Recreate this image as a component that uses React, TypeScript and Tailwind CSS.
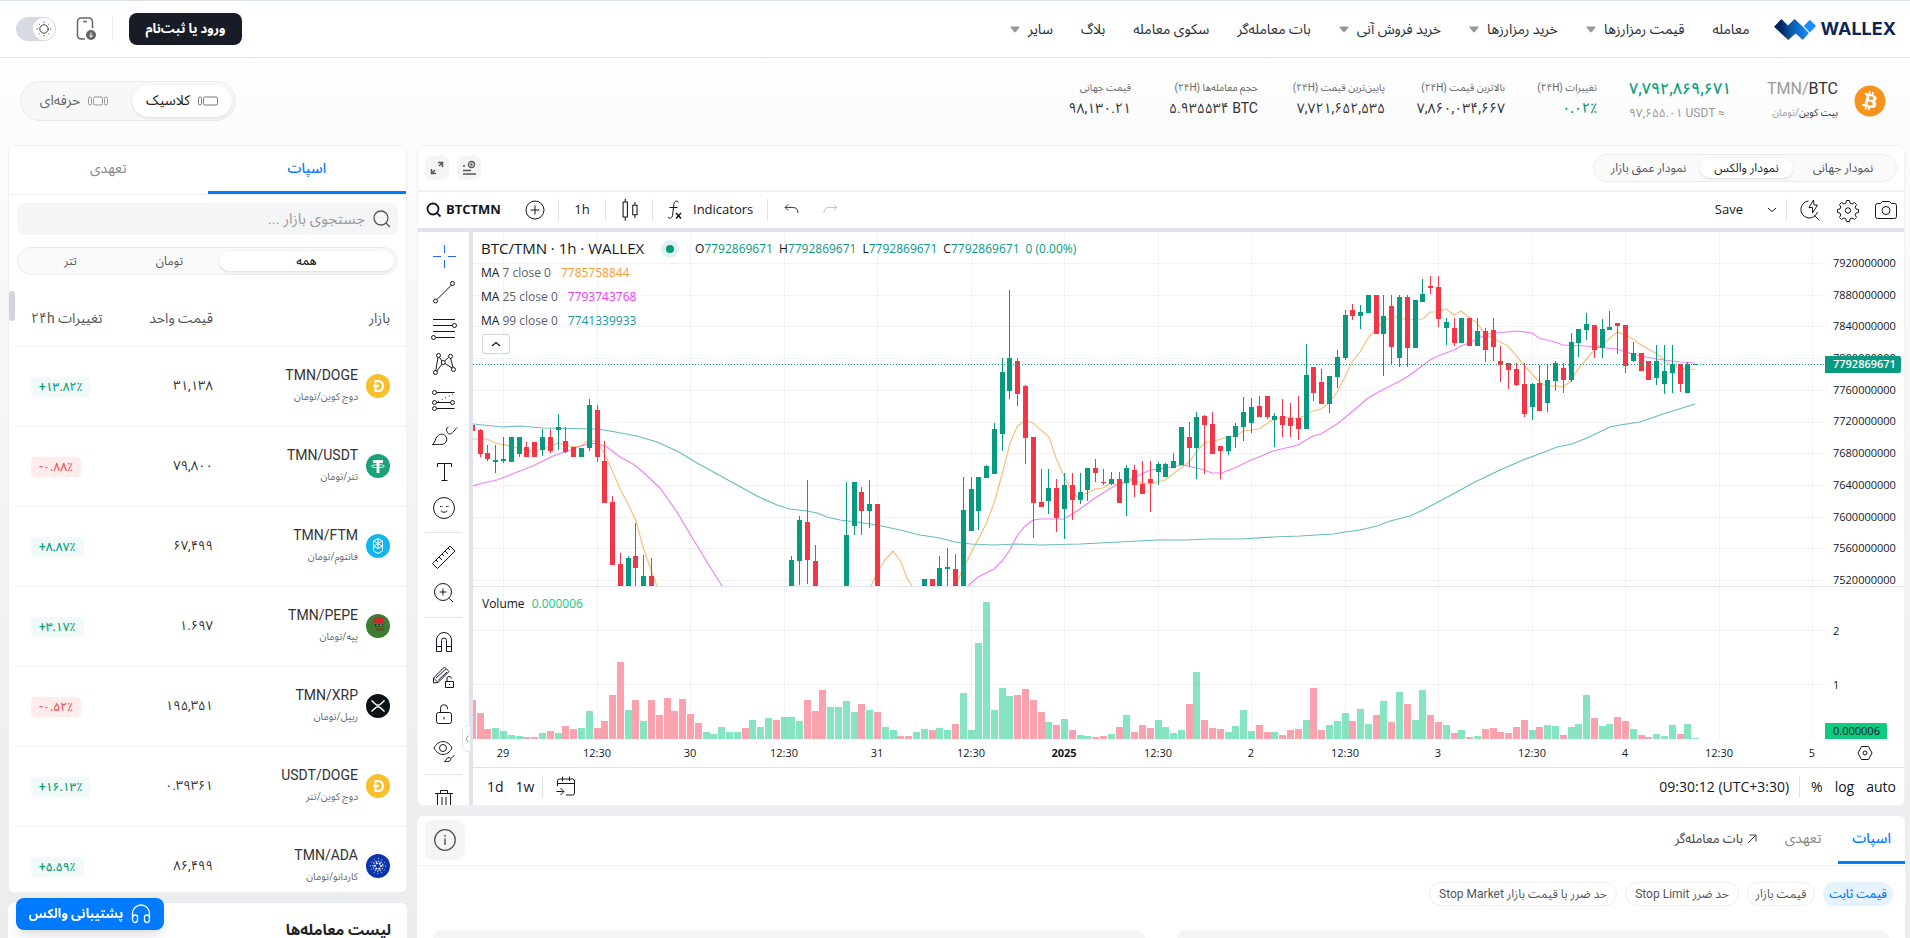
import { useState } from "react"
import type { ReactNode } from "react"
import { FaBitcoin } from "react-icons/fa"

const NAV_ITEMS = [
  { label: "معامله", menu: false },
  { label: "قیمت رمزارزها", menu: true },
  { label: "خرید رمزارزها", menu: true },
  { label: "خرید فروش آنی", menu: true },
  { label: "بات معامله‌گر", menu: false },
  { label: "سکوی معامله", menu: false },
  { label: "بلاگ", menu: false },
  { label: "سایر", menu: true }
]

const STATS = [
  { label: "تغییرات (۲۴H)", value: "۰.۰۲٪", width: "w-[60px]", color: "font-medium text-[#0d9f7a]" },
  { label: "بالاترین قیمت (۲۴H)", value: "۷,۸۶۰,۰۳۴,۶۶۷", width: "w-[88px]", color: "text-[#333]" },
  { label: "پایین‌ترین قیمت (۲۴H)", value: "۷,۷۲۱,۶۵۲,۵۳۵", width: "w-[95px]", color: "text-[#333]" },
  { label: "حجم معامله‌ها (۲۴H)", value: "۵.۹۳۵۵۳۴ BTC", width: "w-[95px]", color: "text-[#333]" },
  { label: "قیمت جهانی", value: "۹۸,۱۳۰.۲۱", width: "w-[56px]", color: "text-[#333]" }
]

const MARKETS = [
  { coin: "doge", pair: "TMN/DOGE", name: "دوج کوین/تومان", price: "۳۱,۱۳۸", change: "+۱۳.۸۲٪" },
  { coin: "usdt", pair: "TMN/USDT", name: "تتر/تومان", price: "۷۹,۸۰۰", change: "-۰.۸۸٪" },
  { coin: "ftm", pair: "TMN/FTM", name: "فانتوم/تومان", price: "۶۷,۴۹۹", change: "+۸.۸۷٪" },
  { coin: "pepe", pair: "TMN/PEPE", name: "پپه/تومان", price: "۱.۶۹۷", change: "+۳.۱۷٪" },
  { coin: "xrp", pair: "TMN/XRP", name: "ریپل/تومان", price: "۱۹۵,۳۵۱", change: "-۰.۵۲٪" },
  { coin: "doge", pair: "USDT/DOGE", name: "دوج کوین/تتر", price: "۰.۳۹۳۶۱", change: "+۱۶.۱۳٪" },
  { coin: "ada", pair: "TMN/ADA", name: "کاردانو/تومان", price: "۸۶,۴۹۹", change: "+۵.۵۹٪" }
]

const PRICE_TICKS = [
  "7920000000",
  "7880000000",
  "7840000000",
  "7800000000",
  "7760000000",
  "7720000000",
  "7680000000",
  "7640000000",
  "7600000000",
  "7560000000",
  "7520000000"
]

const TIME_TICKS = [
  "29", "12:30", "30", "12:30", "31", "12:30", "2025", "12:30",
  "2", "12:30", "3", "12:30", "4", "12:30", "5"
]

const CHART_WIDTH = 1352
const CHART_HEIGHT = 507
const PRICE_PANE = 354

// hour, up (1) or down (0), body top, body bottom, high, low
const CANDLES = [
  [-4, 0, 193, 199, 193, 199], [-3, 0, 198, 222, 197, 225], [-2, 0, 221, 227, 213, 229],
  [-1, 1, 228, 230, 213, 241], [0, 1, 227, 229, 205, 231], [1, 1, 205, 230, 205, 230],
  [2, 1, 205, 222, 205, 225], [3, 0, 215, 225, 210, 225], [4, 0, 210, 225, 210, 225],
  [5, 1, 205, 218, 197, 224], [6, 0, 205, 219, 197, 221], [7, 1, 195, 198, 182, 218],
  [8, 0, 209, 220, 195, 221], [9, 0, 215, 225, 215, 225], [10, 1, 216, 225, 216, 225],
  [11, 1, 173, 216, 167, 219], [12, 0, 178, 225, 173, 230], [13, 0, 229, 271, 209, 271],
  [14, 0, 270, 333, 264, 333], [15, 0, 332, 354, 321, 354], [16, 1, 326, 354, 324, 354],
  [17, 0, 324, 336, 291, 354], [18, 1, 344, 354, 323, 354], [19, 0, 344, 354, 326, 354],
  [37, 1, 328, 354, 324, 354], [38, 1, 288, 329, 284, 353], [39, 0, 290, 328, 248, 352],
  [40, 0, 329, 354, 313, 354], [44, 1, 303, 354, 250, 354], [45, 1, 250, 294, 250, 303],
  [46, 0, 260, 279, 255, 303], [47, 1, 272, 279, 248, 296], [48, 0, 272, 354, 272, 354],
  [54, 1, 347, 354, 347, 354], [55, 0, 347, 354, 347, 354], [56, 1, 336, 354, 324, 354],
  [57, 1, 335, 337, 316, 354], [58, 0, 337, 354, 322, 354], [59, 1, 278, 354, 245, 354],
  [60, 1, 257, 299, 245, 299], [61, 1, 245, 279, 245, 298], [62, 1, 234, 246, 233, 246],
  [63, 1, 197, 242, 191, 242], [64, 1, 140, 202, 126, 219], [65, 1, 126, 159, 58, 167],
  [66, 0, 129, 162, 126, 174], [67, 0, 154, 206, 153, 232], [68, 0, 205, 271, 205, 306],
  [69, 0, 270, 275, 237, 275], [70, 1, 256, 269, 237, 282], [71, 0, 256, 286, 247, 300],
  [72, 1, 253, 277, 241, 307], [73, 0, 253, 268, 241, 288], [74, 1, 260, 268, 241, 272],
  [75, 1, 236, 258, 236, 269], [76, 0, 236, 241, 227, 250], [77, 0, 250, 251, 237, 253],
  [78, 1, 247, 252, 240, 253], [79, 0, 247, 271, 240, 271], [80, 1, 236, 251, 233, 284],
  [81, 0, 238, 253, 233, 265], [82, 0, 252, 262, 229, 262], [83, 0, 247, 251, 229, 280],
  [84, 1, 232, 240, 230, 253], [85, 1, 232, 245, 231, 245], [86, 1, 229, 236, 221, 236],
  [87, 1, 195, 233, 195, 233], [88, 0, 205, 216, 190, 235], [89, 1, 185, 216, 180, 247],
  [90, 0, 184, 193, 183, 242], [91, 0, 192, 222, 180, 222], [92, 0, 214, 219, 214, 247],
  [93, 1, 204, 219, 204, 223], [94, 1, 194, 205, 191, 216], [95, 1, 180, 195, 165, 209],
  [96, 1, 175, 191, 166, 201], [97, 0, 174, 185, 164, 185], [98, 0, 164, 185, 164, 187],
  [99, 1, 184, 188, 181, 215], [100, 0, 184, 193, 167, 205], [101, 0, 186, 194, 171, 205],
  [102, 0, 186, 197, 164, 208], [103, 1, 143, 197, 112, 197], [104, 0, 135, 161, 135, 169],
  [105, 0, 150, 172, 137, 172], [106, 1, 144, 172, 144, 181], [107, 1, 125, 145, 118, 156],
  [108, 1, 83, 126, 78, 128], [109, 0, 78, 84, 72, 88], [110, 1, 80, 84, 73, 97],
  [111, 1, 63, 81, 63, 81], [112, 0, 63, 102, 63, 102], [113, 1, 84, 102, 63, 144],
  [114, 0, 74, 115, 63, 132], [115, 1, 65, 126, 63, 135], [116, 0, 65, 116, 63, 135],
  [117, 1, 68, 116, 68, 116], [118, 1, 62, 70, 47, 70], [119, 0, 54, 56, 44, 62],
  [120, 0, 55, 87, 44, 95], [121, 1, 90, 96, 86, 113], [122, 0, 96, 111, 86, 114],
  [123, 1, 86, 111, 86, 111], [124, 0, 86, 114, 86, 114], [125, 1, 99, 114, 86, 114],
  [126, 0, 99, 118, 96, 130], [127, 0, 98, 115, 86, 129], [128, 0, 129, 133, 114, 150],
  [129, 0, 131, 138, 131, 157], [130, 0, 137, 153, 131, 154], [131, 0, 152, 182, 131, 185],
  [132, 1, 152, 175, 151, 188], [133, 0, 151, 179, 133, 179], [134, 1, 148, 171, 132, 180],
  [135, 1, 131, 149, 129, 159], [136, 0, 136, 148, 131, 161], [137, 1, 110, 148, 101, 150],
  [138, 1, 97, 111, 97, 125], [139, 1, 92, 98, 81, 108], [140, 0, 93, 118, 93, 126],
  [141, 1, 97, 116, 87, 126], [142, 1, 95, 98, 79, 98], [143, 0, 91, 94, 91, 122],
  [144, 0, 93, 134, 93, 141], [145, 1, 121, 129, 110, 130], [146, 0, 121, 139, 121, 139],
  [147, 0, 129, 148, 129, 148], [148, 1, 129, 146, 113, 153], [149, 1, 139, 152, 113, 162],
  [150, 1, 132, 141, 113, 161], [151, 0, 132, 152, 132, 160], [152, 1, 132, 161, 130, 161],
  [153, 1, 132, 133, 132, 133]
]

// One bar per hour from hour -4, negative when the hour closed down
const VOLUMES = [
  -39, -26, -10, 11, 8, 4, 3, -2, -2, 6, -8, 6, -13, -10, 11, 28, -11, -18, -44, -77, 29, -39, 18,
  -39, -24, -41, -28, -40, -25, -16, 7, 5, 12, 7, 7, -11, 19, 12, 21, -19, 22, 22, 18, -39, -28,
  -49, 32, 32, 38, 27, -35, 29, -27, 12, 9, -3, -3, 7, 10, -9, 11, 9, -15, 46, 9, 96, 137, 29, 51,
  43, -44, -50, -39, -27, 17, -14, 20, -9, 4, 3, -2, -3, 5, -12, 24, -7, -14, -11, 19, 12, 6, 9,
  -35, 67, -19, -11, -10, 7, 13, 29, 8, -14, -7, 7, -4, -9, -10, 19, -51, -9, 14, 18, 26, -18, 30,
  15, -24, 38, -17, 47, -35, 19, 49, -24, -17, 14, -6, 9, -2, 3, -10, -11, -7, -6, -12, -19, 9,
  -12, 14, 13, -4, 12, 15, 44, -21, 13, 15, -22, -18, 10, -4, -2, 5, 3, 14, -5, 15, 1
]

const MA_LINES = [
  {
    color: "#f4c07c",
    points:
      "0,207 14,207 22,211 38,214 54,219 62,219 77,215 85,211 100,215 108,214 116,208 124,210 131,221 139,238 147,257 155,272 163,289 170,315 178,338 184,354"
  },
  { color: "#f4c07c", points: "398,354 404,341 412,328 420,319 428,330 434,346 439,354" },
  {
    color: "#f4c07c",
    points:
      "482,354 490,337 498,321 513,292 521,271 529,243 537,211 544,195 552,188 560,191 576,205 583,226 591,244 599,260 606,266 614,261 622,257 630,256 638,251 646,253 660,248 669,251 677,252 692,248 708,236 716,230 724,219 731,211 745,208 755,205 763,204 770,199 786,197 801,187 817,185 825,187 840,179 848,177 856,171 864,160 872,145 879,130 887,120 895,106 903,97 911,88 924,85 934,88 950,87 957,80 965,80 973,77 981,83 988,79 1004,91 1012,102 1027,110 1035,114 1051,133 1066,150 1074,154 1084,154 1090,155 1098,149 1105,137 1121,118 1136,107 1144,100 1152,103 1160,107 1168,113 1184,122 1199,134 1217,138 1222,137"
  },
  {
    color: "#ee82f5",
    points:
      "0,254 10,251 24,248 44,240 60,234 80,224 100,217 117,211 125,212 134,215 147,225 160,232 170,240 187,256 204,280 217,302 234,330 249,354"
  },
  {
    color: "#ee82f5",
    points:
      "495,354 505,345 521,337 529,329 537,318 544,304 552,294 560,288 568,287 591,287 607,277 622,266 638,256 653,249 669,242 677,238 692,236 710,233 724,236 731,238 739,241 749,241 764,235 778,228 786,225 800,219 817,215 825,213 833,208 840,204 848,202 864,192 880,179 895,166 911,157 927,149 934,145 957,128 965,124 981,118 988,114 996,111 1014,102 1024,101 1044,99 1059,101 1066,106 1082,110 1090,113 1113,114 1121,115 1144,117 1152,120 1168,124 1184,127 1207,130 1222,131"
  },
  {
    color: "#67bcc2",
    points:
      "0,192 30,195 47,194 70,196 124,197 137,199 164,204 184,210 204,219 224,231 244,242 264,253 284,264 304,273 317,277 334,279 344,281 354,285 367,288 384,290 404,293 427,298 447,303 467,306 482,310 498,312 521,313 544,312 567,313 607,312 627,311 685,308 714,308 734,307 767,307 800,305 827,304 860,302 872,300 887,298 904,294 917,289 937,284 950,278 965,270 982,261 1000,251 1027,238 1050,228 1074,219 1084,215 1099,212 1114,206 1137,195 1147,193 1167,190 1190,182 1222,172"
  }
]

const hourX = (hour: number) => Math.round(30 + 7.792 * hour)

function Icon({ children, className = "size-7" }: { children: ReactNode; className?: string }) {
  return (
    <svg viewBox="0 0 28 28" fill="none" stroke="currentColor" className={className} aria-hidden="true">
      {children}
    </svg>
  )
}

const DRAWING_TOOLS: { name: string; active?: boolean; divider?: boolean; icon: ReactNode }[] = [
  { name: "Cross", active: true, icon: <path d="M14.5 3v8M14.5 18v8M3 14.5h8M18 14.5h8" /> },
  {
    name: "Trend line",
    icon: (
      <>
        <path d="M7 21.500 21.500 7" />
        <circle cx="5.500" cy="23" r="2" />
        <circle cx="22.500" cy="5.500" r="2" />
      </>
    )
  },
  {
    name: "Fib retracement",
    icon: (
      <>
        <path d="M3 5.500h22M3 11.500h19.500M3 17.500h22M6 23.500h19" />
        <circle cx="24.500" cy="11.500" r="2" />
        <circle cx="3.500" cy="23.500" r="2" />
      </>
    )
  },
  {
    name: "XABCD pattern",
    icon: (
      <>
        <path d="M5.800 20.500 8 7.500M9.500 7.500l2.500 3.500M14.500 11l4-3.500M20.500 8.200l2.500 9M7 21l5-7M15 13.500l7 4.500" />
        <circle cx="8.500" cy="5.500" r="2" />
        <circle cx="20.500" cy="6.300" r="2" />
        <circle cx="13.200" cy="12.500" r="2" />
        <circle cx="5.500" cy="22.500" r="2" />
        <circle cx="23.500" cy="19.500" r="2" />
      </>
    )
  },
  {
    name: "Long position",
    icon: (
      <>
        <path d="M6.500 6.500h18M6.500 16.500h14M6.500 22.500h18" />
        <path d="M8 15.500 23 8" strokeDasharray="1 3" />
        <circle cx="4.500" cy="6.500" r="2" />
        <circle cx="4.500" cy="16.500" r="2" />
        <circle cx="22.500" cy="16.500" r="2" />
        <circle cx="4.500" cy="22.500" r="2" />
      </>
    )
  },
  {
    name: "Brush",
    icon: (
      <path d="M2.500 22.500c3-2 2.500-6 5-8.500 2.500-2.500 6-2.500 8 0s1.500 5.500-1 7.500c-1.500 1-4 1-12 1zM16.500 6.500c0 3.500 1 5.500 3.500 5.500 2 0 4-3 7-6.500M16.500 6.500l2-1.500" />
    )
  },
  { name: "Text", icon: <path d="M7.500 9V5.500h14V9M14.500 5.500v17M11.500 22.500h6" /> },
  {
    name: "Emoji",
    icon: (
      <>
        <circle cx="14" cy="14" r="10.500" />
        <path d="M10 12.500h1M11.500 12.500h1M16 12.500h1M17.500 12.500h1" />
        <path d="M11 16.500c.5 2.300 5.500 2.300 6 0" />
      </>
    )
  },
  {
    name: "Measure",
    divider: true,
    icon: <path d="M2.500 20.500 20 3l5 5L7.500 25.500zM6 17l2 2M9 14l3 3M12 11l2 2M15 8l3 3M18 5l2 2" />
  },
  {
    name: "Zoom in",
    icon: (
      <>
        <circle cx="13" cy="13" r="8.500" />
        <path d="m19.500 19.500 3.500 3.500M13 9.500v7M9.500 13h7" />
      </>
    )
  },
  {
    name: "Magnet mode",
    divider: true,
    icon: <path d="M6.500 23.500V12a7.500 7.500 0 0 1 15 0v11.500h-5V12.500a2.500 2.500 0 0 0-5 0v11zM6.500 18.500h5M16.500 18.500h5" />
  },
  {
    name: "Stay in drawing mode",
    icon: (
      <>
        <path d="M3.500 14 14.500 3l4.500 4.500-11 11-4.500.500zM6 14l10-9M8 16.500l9-8.500M3.500 14l4.500 4.500" />
        <path d="M15.500 17.500h8v6h-8zM17 17.500V15a2.200 2.200 0 0 1 4.500-.500M19.500 20v1" />
      </>
    )
  },
  {
    name: "Lock all drawings",
    icon: (
      <path d="M6.500 14.500a2 2 0 0 1 2-2h11a2 2 0 0 1 2 2v7a2 2 0 0 1-2 2h-11a2 2 0 0 1-2-2zM10.500 12.500v-4a3.500 3.500 0 0 1 7-.500v1M14 17v2.500" />
    )
  },
  {
    name: "Hide all drawings",
    icon: (
      <>
        <path d="M4 12c2-4 5.500-6.500 9-6.500s7 2.500 9 6.500c-2 4-5.500 6.500-9 6.500S6 16 4 12z" />
        <circle cx="13" cy="12" r="3.500" />
        <path d="M14.500 25.500c2-.500 1.500-4 4.500-4 2 0 2.500 2 1 3.200-1 1-3 .800-5.500.800zM21.500 22l3-3" />
      </>
    )
  },
  {
    name: "Remove drawings",
    divider: true,
    icon: <path d="M5 8.500h18M7.500 8.500v16h13v-16M10.500 8.500v-3h7v3M12 12v10M16 12v10" />
  }
]

function WallexLogo() {
  return (
    <a href="#" dir="ltr" className="flex items-center gap-[5px] text-[#0b2559]">
      <svg viewBox="0 0 124 62" className="h-[21px] w-[42px]" aria-hidden="true">
        <defs>
          <linearGradient id="wallex-mark" x1="0" x2="1" y1="0" y2="0">
            <stop offset="0.2" stopColor="#03275c" />
            <stop offset="0.5" stopColor="#0b5aa8" />
            <stop offset="1" stopColor="#1a8cff" />
          </linearGradient>
        </defs>
        <path
          d="M0 23 22 0l19 19L61 0l22 21 20 20-18 21-21-19-22 19z"
          fill="url(#wallex-mark)"
        />
        <path d="M106 2l18 19-18 19-18-19z" fill="#1a8cff" />
      </svg>
      <span className="font-['Inter'] text-[18px] leading-6 font-bold">WALLEX</span>
    </a>
  )
}

function Caret() {
  return (
    <svg viewBox="0 0 10 7" className="h-[7px] w-[10px] fill-[#999]" aria-hidden="true">
      <path d="M1 .5h8q1 0 .5 1L5.800 6q-.8.800-1.600 0L.5 1.500Q0 .5 1 .5z" />
    </svg>
  )
}

function Header() {
  const [light, setLight] = useState(true)

  return (
    <header className="flex h-[58px] shrink-0 items-center border-t border-b border-t-[#d9e1e6] border-b-[#e3e5e5] bg-white pr-[14px] pl-4">
      <WallexLogo />
      <nav className="mr-6 flex items-center gap-7">
        {NAV_ITEMS.map((item) => (
          <a
            key={item.label}
            href="#"
            className="flex items-center gap-2 text-[14px] leading-6 whitespace-nowrap text-[#2a2d33]"
          >
            {item.label}
            {item.menu && <Caret />}
          </a>
        ))}
      </nav>

      <div className="mr-auto flex items-center">
        <button
          type="button"
          className="h-8 w-[113px] rounded-lg bg-[#171c26] text-[13px] font-bold whitespace-nowrap text-white"
        >
          ورود یا ثبت‌نام
        </button>
        <span className="mr-4 h-6 w-px bg-[#ececec]" />
        <button type="button" aria-label="دانلود اپلیکیشن" className="mr-4 text-[#666]">
          <svg viewBox="0 0 20 24" className="h-6 w-5" fill="none" stroke="currentColor" strokeWidth="1.500">
            <path d="M9 22H5a3.500 3.500 0 0 1-3.500-3.500v-14A3.500 3.500 0 0 1 5 1h8a3.500 3.500 0 0 1 3.500 3.500V11M7 4.500h4" />
            <circle cx="15" cy="18" r="5" fill="currentColor" stroke="none" />
            <path d="M15 15.500v4.500M13.200 18.500 15 20.200l1.800-1.700" stroke="#fff" strokeWidth="1" />
          </svg>
        </button>
        <label className="mr-5 flex h-6 w-10 cursor-pointer items-center rounded-full border border-[#d6dae2] bg-[#d6dae2]">
          <input
            type="checkbox"
            className="sr-only"
            aria-label="حالت روشن"
            checked={light}
            onChange={() => setLight(!light)}
          />
          <span className="flex size-[22px] items-center justify-center rounded-full bg-white text-[#444]">
            <svg viewBox="0 0 16 16" className="size-4" fill="none" stroke="currentColor" strokeLinecap="round">
              <circle cx="8" cy="8" r="4.200" />
              <path d="M8 1v.5M8 14.500v.5M1 8h.5M14.500 8h.5M3 3l.3.300M12.700 12.700l.3.300M3 13l.3-.300M12.700 3.300 13 3" />
            </svg>
          </span>
        </label>
      </div>
    </header>
  )
}

function PairSummary() {
  return (
    <section className="flex h-[87px] shrink-0 items-center pr-6 pb-0.5 pl-5">
      <span className="rounded-full bg-white">
        <FaBitcoin className="size-8 text-[#f7931a]" />
      </span>
      <div className="mr-4 w-[71px] whitespace-nowrap">
        <p dir="ltr" className="text-right text-[16px] leading-5 text-[#999]">
          TMN/<span className="text-[#333]">BTC</span>
        </p>
        <p className="mt-1 text-[10px] leading-5 text-[#999]">
          <span className="text-[#333]">بیت کوین</span>/تومان
        </p>
      </div>
      <div dir="ltr" className="mr-10 w-[98px] whitespace-nowrap">
        <p className="text-[16px] leading-5 font-medium text-[#0d9f7a]">۷,۷۹۲,۸۶۹,۶۷۱</p>
        <p className="mt-1 text-[12px] leading-5 text-[#999]">۹۷,۶۵۵.۰۱ USDT ≈</p>
      </div>
      <dl className="mr-8 flex gap-8 pb-1.5">
        {STATS.map((stat) => (
          <div key={stat.label} className={`whitespace-nowrap ${stat.width}`}>
            <dt className="text-[10px] leading-5 text-[#666]">{stat.label}</dt>
            <dd className={`flex text-[14px] leading-5 ${stat.color}`}>
              <bdi dir="ltr">{stat.value}</bdi>
            </dd>
          </div>
        ))}
      </dl>

      <div className="mr-auto flex h-10 items-center gap-2 rounded-full border border-[#ebebeb] bg-[#f7f8f8] p-[3px] text-[14px] whitespace-nowrap">
        <button
          type="button"
          className="flex h-8 w-[100px] items-center justify-center gap-2 rounded-full bg-white text-[#222] shadow"
        >
          <svg viewBox="0 0 20 10" className="h-[10px] w-5" fill="none" stroke="#777" aria-hidden="true">
            <rect x="5.500" y="1" width="14" height="8" rx="1.500" />
            <rect x=".5" y="1" width="3" height="8" rx="1.500" />
          </svg>
          کلاسیک
        </button>
        <button type="button" className="flex h-8 w-[100px] items-center justify-center gap-2 text-[#666]">
          <svg viewBox="0 0 20 10" className="h-[10px] w-5" fill="none" stroke="#999" aria-hidden="true">
            <rect x=".5" y="1" width="3" height="8" rx="1.500" />
            <rect x="5.500" y="1" width="9" height="8" rx="1.500" />
            <rect x="16.500" y="1" width="3" height="8" rx="1.500" />
          </svg>
          حرفه‌ای
        </button>
      </div>
    </section>
  )
}

function CoinIcon({ coin }: { coin: string }) {
  return (
    <svg viewBox="0 0 24 24" className="size-6 shrink-0" fill="none" aria-hidden="true">
      {coin === "doge" && (
        <>
          <circle cx="12" cy="12" r="12" fill="#fbbf2d" />
          <path
            d="M9.500 7v10h2.700c3.300 0 4.800-2 4.800-5s-1.500-5-4.800-5zM7 12h6"
            stroke="#fff"
            strokeWidth="2"
          />
        </>
      )}
      {coin === "usdt" && (
        <>
          <circle cx="12" cy="12" r="12" fill="#1ba27a" />
          <path d="M7 7.500h10M12 7.500V19" stroke="#fff" strokeWidth="2.800" />
          <ellipse cx="12" cy="12.200" rx="6.500" ry="1.500" stroke="#fff" strokeWidth=".9" />
        </>
      )}
      {coin === "ftm" && (
        <>
          <circle cx="12" cy="12" r="12" fill="#13b5ec" />
          <path
            d="M12 4.500 16.500 7v10L12 19.500 7.500 17V7zM7.500 7l9 5.200M16.500 7l-9 5.200M12 4.500v10M7.500 12l4.500 2.700 4.500-2.700"
            stroke="#fff"
            strokeWidth="1"
          />
        </>
      )}
      {coin === "pepe" && (
        <>
          <circle cx="12" cy="12" r="12" fill="#3c7d31" />
          <path d="M7 6c1-3 8-4 11-1l-1 4H8z" fill="#c8282d" />
          <path d="M9 10h8v2.500H9z" fill="#1d3a1a" />
          <path d="M10.500 10.500h2v1.500h-2zM14 10.500h2v1.500h-2z" fill="#8f9fa0" />
          <path d="M10 14.500h8v1.800h-8z" fill="#8d2f23" />
        </>
      )}
      {coin === "xrp" && (
        <>
          <circle cx="12" cy="12" r="12" fill="#0b1216" />
          <path
            d="M5.500 6.500 9 9.800c1.700 1.600 4.300 1.600 6 0l3.500-3.300M5.500 17.500 9 14.200c1.700-1.600 4.300-1.600 6 0l3.500 3.300"
            stroke="#fff"
            strokeWidth="1.500"
          />
        </>
      )}
      {coin === "ada" && (
        <>
          <circle cx="12" cy="12" r="12" fill="#0a35ad" />
          <g stroke="#fff" strokeLinecap="round">
            <circle cx="12" cy="12" r="3" strokeWidth="2" strokeDasharray="0.100 3.040" />
            <circle cx="12" cy="12" r="5" strokeWidth="1.300" strokeDasharray="0.100 2.518" />
            <circle cx="12" cy="12" r="7.500" strokeWidth="1" strokeDasharray="0.100 3.827" />
          </g>
        </>
      )}
    </svg>
  )
}

function MarketList() {
  const [query, setQuery] = useState("")

  return (
    <section className="flex h-[748px] shrink-0 flex-col overflow-hidden rounded-md border border-[#f0f1f2] bg-white">
      <div className="flex h-[49px] shrink-0 border-b border-[#f0f1f2] text-[14px]">
        <button type="button" className="flex-1 border-b-3 border-[#007bff] font-medium text-[#007bff]">
          اسپات
        </button>
        <button type="button" className="flex-1 border-b-3 border-transparent text-[#888]">
          تعهدی
        </button>
      </div>

      <label className="mx-2 mt-2 flex h-8 shrink-0 items-center gap-2 rounded-lg bg-[#f4f5f7] px-[7px]">
        <svg viewBox="0 0 18 18" className="size-[18px]" fill="none" stroke="#555" strokeWidth="1.300" aria-hidden="true">
          <circle cx="8" cy="8" r="7" />
          <path d="m13 13 4 4" />
        </svg>
        <input
          type="text"
          value={query}
          onChange={(e) => setQuery(e.target.value)}
          placeholder="جستجوی بازار ..."
          className="min-w-0 flex-1 text-[15px] outline-none placeholder:text-[#999]"
        />
      </label>

      <div className="mx-2 mt-3 flex h-7 shrink-0 items-center rounded-full border border-[#ebebeb] bg-[#fafafa] px-[3px] text-[12px] text-[#555]">
        <button type="button" className="h-5 w-[175px] rounded-full bg-white font-medium text-[#222] shadow">
          همه
        </button>
        <button type="button" className="flex-1">
          تومان
        </button>
        <button type="button" className="flex-1">
          تتر
        </button>
      </div>

      <div className="mt-4 flex min-h-0 flex-1 overflow-hidden">
        <table className="h-fit min-w-0 flex-1 table-fixed">
          <thead>
            <tr className="h-[55px] border-b border-[#eff0f1] text-[14px] text-[#555]">
              <th className="w-[193px] pr-4 text-right font-normal">بازار</th>
              <th className="w-[104px] text-right font-normal">قیمت واحد</th>
              <th className="pl-4 text-left font-normal whitespace-nowrap">تغییرات ۲۴h</th>
            </tr>
          </thead>
          <tbody>
            {MARKETS.map((market) => (
              <tr key={market.pair} className="h-20 border-b border-[#eff0f1]">
                <td className="pr-4">
                  <div className="flex items-center gap-2">
                    <CoinIcon coin={market.coin} />
                    <div className="whitespace-nowrap">
                      <p className="text-[14px] leading-5 text-[#333]">{market.pair}</p>
                      <p className="mt-0.5 text-[10px] leading-5 text-[#666]">{market.name}</p>
                    </div>
                  </div>
                </td>
                <td className="text-[13px] text-[#333]">{market.price}</td>
                <td className="pl-4" dir="ltr">
                  <span
                    className={
                      market.change.startsWith("+")
                        ? "inline-block h-5 rounded bg-[#f1faf8] px-2 text-[12px] leading-5 font-medium text-[#0d9f7a]"
                        : "inline-block h-5 rounded bg-[#ffeded] px-2 text-[12px] leading-5 font-medium text-[#f6535a]"
                    }
                  >
                    {market.change}
                  </span>
                </td>
              </tr>
            ))}
          </tbody>
        </table>
        <div className="w-[6px] shrink-0">
          <div className="h-[30px] rounded-full bg-[#d1d4dc]" />
        </div>
      </div>
    </section>
  )
}

function ToolbarDivider() {
  return <span className="h-[22px] w-px bg-[#e0e3eb]" />
}

function ChartToolbar() {
  return (
    <div className="flex h-10 items-center border-b-4 border-[#e0e3eb] pr-1 pl-2 text-[13px] text-[#131722]">
      <button type="button" className="flex items-center gap-1 font-bold">
        <svg viewBox="0 0 16 16" className="size-4" fill="none" stroke="currentColor" strokeWidth="1.800">
          <circle cx="7" cy="7" r="5.500" />
          <path d="m11 11 3.500 3.500" />
        </svg>
        <span className="w-[54px] text-left">BTCTMN</span>
      </button>
      <button type="button" aria-label="Compare" className="mr-[9px] ml-[21px]">
        <Icon>
          <circle cx="14" cy="14" r="9" />
          <path d="M14 9.500v9M9.500 14h9" />
        </Icon>
      </button>
      <ToolbarDivider />
      <button type="button" className="w-[46px]">
        1h
      </button>
      <ToolbarDivider />
      <button type="button" aria-label="Candles" className="mx-2">
        <Icon className="size-[30px]">
          <path d="M8.500 6.500h4v14h-4zM10.500 3.500v3M10.500 20.500v3.500M17.500 9.500h4v9h-4zM19.500 6.500v3M19.500 18.500v3" />
        </Icon>
      </button>
      <ToolbarDivider />
      <button type="button" className="mr-3 ml-2 flex items-center gap-1">
        <Icon>
          <path d="M17.500 6.500c-.500-2-4-2-4.500 1l-1.500 12c-.400 3-3.500 3.500-4.500 1.500M8.500 11.500h8" />
          <path d="m15 17 5 5.500M20 17l-5 5.500" strokeWidth="1.500" />
        </Icon>
        <span className="w-[62px] text-left">Indicators</span>
      </button>
      <ToolbarDivider />
      <button type="button" aria-label="Undo" className="ml-3">
        <Icon className="size-6">
          <path d="M9.500 7.500 6 11l3.500 3.500M6 11h9c4 0 6 2.500 6 6.500" />
        </Icon>
      </button>
      <button type="button" aria-label="Redo" className="ml-[14px] text-[#b5b8c0]">
        <Icon className="size-6">
          <path d="m18.500 7.500 3.500 3.500-3.500 3.500M22 11h-9c-4 0-6 2.500-6 6.500" />
        </Icon>
      </button>

      <div className="ml-auto flex items-center">
        <button type="button" className="mr-6">
          Save
        </button>
        <button type="button" aria-label="Save menu" className="mr-[9px]">
          <svg viewBox="0 0 10 6" className="h-[6px] w-[10px]" fill="none" stroke="currentColor">
            <path d="m1 1 4 3.500L9 1" />
          </svg>
        </button>
        <ToolbarDivider />
        <button type="button" aria-label="Quick search" className="ml-[9px]">
          <Icon>
            <path d="M12.500 5a8.500 8.500 0 1 0 9 11M18.500 19.500l5 5M17.500 4l-4.500 7.500h3.500V17l5-8h-3.500z" />
          </Icon>
        </button>
        <button type="button" aria-label="Settings" className="ml-[10px]">
          <Icon>
            <path d="M12.500 4.500h3l.7 2.700 1.900.8 2.400-1.400 2 2-1.300 2.500.8 1.900 2.500.500v3l-2.600.600-.8 2 1.400 2.300-2 2-2.500-1.400-1.900.8-.6 2.700h-3l-.7-2.700-1.900-.8-2.400 1.400-2-2 1.300-2.400-.8-1.900-2.500-.600v-3l2.500-.600.8-1.900L5.500 8.600l2-2L9.900 8l1.900-.8z" />
            <circle cx="14" cy="14.500" r="2.700" />
          </Icon>
        </button>
        <button type="button" aria-label="Take a snapshot" className="ml-[10px]">
          <Icon>
            <path d="M3.500 9.500a2 2 0 0 1 2-2h3l2-2h7l2 2h3a2 2 0 0 1 2 2v11a2 2 0 0 1-2 2h-17a2 2 0 0 1-2-2z" />
            <circle cx="14" cy="14.500" r="4" />
          </Icon>
        </button>
      </div>
    </div>
  )
}

function ChartLegend() {
  return (
    <div className="absolute top-0 left-2 text-[#131722]">
      <div className="mt-1 flex h-[25px] items-center whitespace-nowrap">
        <h2 className="w-[174px] text-[15px]">BTC/TMN · 1h · WALLEX</h2>
        <span className="mr-4 ml-[6px] flex size-[18px] items-center justify-center rounded-full bg-[#dff1ee]">
          <span className="size-2 rounded-full bg-[#089981]" />
        </span>
        <p className="flex gap-1.5 text-[12px] text-[#089981]">
          {["O", "H", "L", "C"].map((field) => (
            <span key={field}>
              <span className="text-[#131722]">{field}</span>7792869671
            </span>
          ))}
          <span>0 (0.00%)</span>
        </p>
      </div>
      <ul className="text-[12px] leading-6">
        <li>
          MA <span className="text-[#5d606b]">7 close 0</span>
          <span className="ml-[10px] text-[#f59a35]">7785758844</span>
        </li>
        <li>
          MA <span className="text-[#5d606b]">25 close 0</span>
          <span className="ml-[10px] text-[#e83ef2]">7793743768</span>
        </li>
        <li>
          MA <span className="text-[#5d606b]">99 close 0</span>
          <span className="ml-[10px] text-[#1a97a3]">7741339933</span>
        </li>
      </ul>
      <button
        type="button"
        aria-label="Hide indicator legend"
        className="mt-px ml-px flex h-5 w-7 items-center justify-center rounded-[3px] border border-[#d1d4dc] bg-white"
      >
        <svg viewBox="0 0 10 6" className="h-[6px] w-[10px]" fill="none" stroke="currentColor" strokeWidth="1.200">
          <path d="M1 5 5 1.500 9 5" />
        </svg>
      </button>
    </div>
  )
}

function PriceChart() {
  const priceLines = PRICE_TICKS.map((_, i) => Math.round(31 + i * 31.7))

  return (
    <svg
      viewBox={`0 0 ${CHART_WIDTH} ${CHART_HEIGHT}`}
      preserveAspectRatio="none"
      className="h-[507px] min-w-0 flex-1"
      role="img"
      aria-label="BTC/TMN"
    >
      <g fill="#2a2e39" fillOpacity="0.060" shapeRendering="crispEdges">
        {[...priceLines, 398, 452].map((y) => (
          <rect key={y} x="0" y={y} width={CHART_WIDTH} height="1" />
        ))}
        {TIME_TICKS.map((_, i) => (
          <rect key={i} x={hourX(i * 12)} y="0" width="1" height={CHART_HEIGHT} />
        ))}
      </g>

      <g shapeRendering="crispEdges">
        {VOLUMES.map((volume, i) => (
          <rect
            key={i}
            x={hourX(i - 4) - 3}
            y={CHART_HEIGHT - Math.abs(volume)}
            width="7"
            height={Math.abs(volume)}
            fill={volume > 0 ? "#0ecb81" : "#f6465d"}
            fillOpacity="0.500"
          />
        ))}
      </g>

      {MA_LINES.map((line, i) => (
        <polyline key={i} points={line.points} fill="none" stroke={line.color} strokeWidth="1.200" />
      ))}

      <g shapeRendering="crispEdges">
        {CANDLES.map(([hour, up, top, bottom, high, low]) => (
          <g key={hour} fill={up ? "#089981" : "#f23645"}>
            <rect x={hourX(hour)} y={high} width="1" height={low - high} />
            <rect x={hourX(hour) - 2} y={top} width="5" height={bottom - top} />
          </g>
        ))}
        <path d={`M0 132.500H${CHART_WIDTH}`} stroke="#089981" strokeDasharray="1 2" />
        <rect x="0" y={PRICE_PANE} width={CHART_WIDTH} height="1" fill="#e0e3eb" />
      </g>
    </svg>
  )
}

function PriceAxis() {
  return (
    <div className="relative h-[507px] w-[79px] shrink-0 text-[11px] leading-4 text-[#131722]">
      <div className="h-[355px] border-b border-[#e0e3eb] pt-[23px] pl-2">
        <ul className="flex h-[333px] flex-col justify-between">
          {PRICE_TICKS.map((tick) => (
            <li key={tick}>{tick}</li>
          ))}
        </ul>
      </div>
      <ul className="flex flex-col gap-[38px] pt-9 pl-2">
        <li>2</li>
        <li>1</li>
      </ul>
      <span className="absolute top-[124px] left-0 h-[17px] w-[76px] rounded-r-xs bg-[#089981] pl-2 font-semibold text-white">
        7792869671
      </span>
      <span className="absolute bottom-0 left-0 h-4 w-[62px] rounded-tr-xs bg-[#0ecb81] pl-2 text-[#131722]">
        0.000006
      </span>
    </div>
  )
}

function TradingChart() {
  return (
    <div dir="ltr" className="border-t-2 border-[#f0f1f2] font-['Open_Sans',sans-serif]">
      <ChartToolbar />
      <div className="flex h-[573px]">
        <div className="relative w-[55px] shrink-0 border-r-4 border-[#e0e3eb]">
          <div className="h-full overflow-hidden pt-[6px] text-[#131722]">
            {DRAWING_TOOLS.map((tool) => (
              <div key={tool.name}>
                {tool.divider && <div className="mx-[7px] my-[6px] h-px bg-[#e0e3eb]" />}
                <button
                  type="button"
                  aria-label={tool.name}
                  className={
                    tool.active
                      ? "flex h-9 w-full items-center justify-center text-[#2962ff]"
                      : "flex h-9 w-full items-center justify-center"
                  }
                >
                  <Icon>{tool.icon}</Icon>
                </button>
              </div>
            ))}
          </div>
          <button
            type="button"
            aria-label="Hide drawing toolbar"
            className="absolute right-[-2px] bottom-[53px] flex h-[27px] w-[9px] items-center justify-center rounded-l-md border border-[#e0e3eb] bg-white"
          >
            <svg viewBox="0 0 4 8" className="h-2 w-1" fill="none" stroke="#9598a1" aria-hidden="true">
              <path d="M3.500.5 1 4l2.500 3.500" />
            </svg>
          </button>
        </div>

        <div className="min-w-0 flex-1">
          <div className="relative flex">
            <PriceChart />
            <PriceAxis />
            <ChartLegend />
            <p className="absolute top-[364px] left-[9px] text-[12px] leading-4 text-[#131722]">
              Volume <span className="ml-1 text-[#0ecb81]">0.000006</span>
            </p>
          </div>
          <div className="flex h-7 text-[11px] leading-7 text-[#131722]">
            <div className="relative min-w-0 flex-1">
              {TIME_TICKS.map((tick, i) => (
                <span
                  key={i}
                  className={
                    tick === "2025" ? "absolute -translate-x-1/2 font-bold" : "absolute -translate-x-1/2"
                  }
                  style={{ left: `${(hourX(i * 12) / CHART_WIDTH) * 100}%` }}
                >
                  {tick}
                </span>
              ))}
            </div>
            <button type="button" aria-label="Axis settings" className="flex w-[79px] items-center justify-center">
              <svg viewBox="0 0 16 16" className="size-4" fill="none" stroke="currentColor">
                <path d="M4.500 1.500h7l3.500 6.500-3.500 6.500h-7L1 8z" />
                <circle cx="8" cy="8" r="2" />
              </svg>
            </button>
          </div>
          <div className="flex h-[38px] items-center border-t border-[#e0e3eb] pr-2 pl-[14px] text-[14px] text-[#131722]">
            <button type="button">1d</button>
            <button type="button" className="mr-2 ml-3">
              1w
            </button>
            <ToolbarDivider />
            <button type="button" aria-label="Go to date" className="ml-[9px]">
              <Icon>
                <path d="M5.500 13V8a2 2 0 0 1 2-2h13a2 2 0 0 1 2 2v12a2 2 0 0 1-2 2H14M5.500 10.500h17M10.500 3.500V8M17.500 3.500V8M4.500 18.500h7M8.500 15l3.500 3.500L8.500 22" />
              </Icon>
            </button>
            <div className="ml-auto flex items-center">
              <button type="button" className="mr-[10px]">
                09:30:12 (UTC+3:30)
              </button>
              <ToolbarDivider />
              <button type="button" className="ml-[11px]">
                %
              </button>
              <button type="button" className="ml-3">
                log
              </button>
              <button type="button" className="ml-3">
                auto
              </button>
            </div>
          </div>
        </div>
      </div>
    </div>
  )
}

function ChartPanel() {
  return (
    <section className="shrink-0 rounded-md border border-[#f0f1f2] bg-white">
      <div className="flex h-11 items-center px-[7px]">
        <div className="flex h-7 items-center rounded-full border border-[#ebebeb] bg-[#fafafa] px-[3px] text-[12px] whitespace-nowrap text-[#555]">
          <button type="button" className="w-[100px]">
            نمودار جهانی
          </button>
          <button type="button" className="h-5 w-[93px] rounded-full bg-white text-[#222] shadow">
            نمودار والکس
          </button>
          <button type="button" className="w-[103px]">
            نمودار عمق بازار
          </button>
        </div>
        <div className="mr-auto flex gap-2 text-[#555]">
          <button
            type="button"
            aria-label="تنظیمات نمودار"
            className="flex size-6 items-center justify-center rounded-md bg-[#f4f5f7]"
          >
            <svg viewBox="0 0 16 16" className="size-4" fill="none" stroke="currentColor" strokeWidth="1.300">
              <circle cx="10.500" cy="4.500" r="3" />
              <circle cx="10.500" cy="4.500" r=".6" fill="currentColor" />
              <path d="M2 6h2M2 10.500h8M2 14h13" />
            </svg>
          </button>
          <button
            type="button"
            aria-label="تمام صفحه"
            className="flex size-6 items-center justify-center rounded-md bg-[#f4f5f7]"
          >
            <svg viewBox="0 0 16 16" className="size-4" fill="none" stroke="currentColor" strokeWidth="1.500">
              <path d="M9 2.500h4.500V7M13.500 2.500 10 6M7 13.500H2.500V9M2.500 13.500 6 10" />
            </svg>
          </button>
        </div>
      </div>
      <TradingChart />
    </section>
  )
}

function OrderPanel() {
  return (
    <section className="min-h-0 flex-1 rounded-t-md bg-white">
      <div className="flex h-[50px] border-b border-[#eff0f1] text-[14px]">
        <button type="button" className="mb-px w-[67px] border-b-3 border-[#007bff] font-medium text-[#007bff]">
          اسپات
        </button>
        <button type="button" className="mb-px w-[70px] border-b-3 border-transparent text-[#888]">
          تعهدی
        </button>
        <a href="#" className="mr-[11px] mb-1 flex items-center gap-1 text-[13px] text-[#444]">
          <svg viewBox="0 0 10 10" className="size-[10px]" fill="none" stroke="currentColor" aria-hidden="true">
            <path d="M1 9 9 1M2.500 1H9v6.500" />
          </svg>
          بات معامله‌گر
        </a>
        <button
          type="button"
          aria-label="راهنما"
          className="mt-1 mr-auto ml-2 flex size-10 items-center justify-center rounded-lg bg-[#f4f5f7] text-[#555]"
        >
          <svg viewBox="0 0 24 24" className="size-6" fill="none" stroke="currentColor" strokeWidth="1.300">
            <circle cx="12" cy="12" r="10.300" />
            <path d="M12 10.500V17M12 7v1.500" strokeWidth="1.500" />
          </svg>
        </button>
      </div>
      <div className="mt-4 flex gap-2 pr-3 text-[12px] whitespace-nowrap text-[#555]">
        <button type="button" className="h-6 w-[70px] rounded-full bg-[#e5f2ff] font-medium text-[#007bff]">
          قیمت ثابت
        </button>
        <button type="button" className="h-6 w-[68px] rounded-full border border-[#eee]">
          قیمت بازار
        </button>
        <button type="button" className="h-6 w-[114px] rounded-full border border-[#eee]">
          حد ضرر Stop Limit
        </button>
        <button type="button" className="h-6 w-[188px] rounded-full border border-[#eee]">
          حد ضرر با قیمت بازار Stop Market
        </button>
      </div>
      <div className="mt-6 grid grid-cols-2 gap-8 px-4">
        <div className="h-12 rounded-lg bg-[#f4f5f7]" />
        <div className="h-12 rounded-lg bg-[#f4f5f7]" />
      </div>
    </section>
  )
}

export default function App() {
  return (
    <div
      dir="rtl"
      lang="fa"
      className="flex h-screen flex-col overflow-hidden bg-linear-to-b from-white via-[#f3f4f5] to-[#eaecee] font-['Roboto','Noto_Sans_Arabic','DejaVu_Sans',sans-serif]"
    >
      <Header />
      <PairSummary />
      <main className="flex min-h-0 flex-1 gap-[10px] pr-[5px] pl-2">
        <div className="flex min-w-0 flex-1 flex-col gap-[10px]">
          <ChartPanel />
          <OrderPanel />
        </div>
        <aside className="flex w-[399px] shrink-0 flex-col gap-[10px]">
          <MarketList />
          <section className="min-h-0 flex-1 rounded-t-md bg-white px-4 pt-[15px]">
            <h2 className="text-[15px] leading-6 font-bold text-[#222]">لیست معامله‌ها</h2>
          </section>
        </aside>
      </main>
      <button
        type="button"
        className="fixed bottom-2 left-4 flex h-8 w-[148px] items-center justify-center gap-2 rounded-lg bg-[#007bff] text-[13px] font-bold whitespace-nowrap text-white shadow-lg"
      >
        <svg viewBox="0 0 20 20" className="size-5" fill="none" stroke="currentColor" strokeWidth="1.300" aria-hidden="true">
          <path d="M1.500 14V9.500a8.500 8.500 0 0 1 17 0V14" />
          <path d="M1.500 14.500c0-2.500 1-3.500 2.500-3.500s2.500.500 2.500 2v3c0 1.500-1 2.500-2.500 2.500s-2.500-1.500-2.500-4zM18.500 14.500c0-2.500-1-3.500-2.500-3.500s-2.500.500-2.500 2v3c0 1.500 1 2.500 2.500 2.500s2.500-1.500 2.500-4z" />
        </svg>
        پشتیبانی والکس
      </button>
    </div>
  )
}
